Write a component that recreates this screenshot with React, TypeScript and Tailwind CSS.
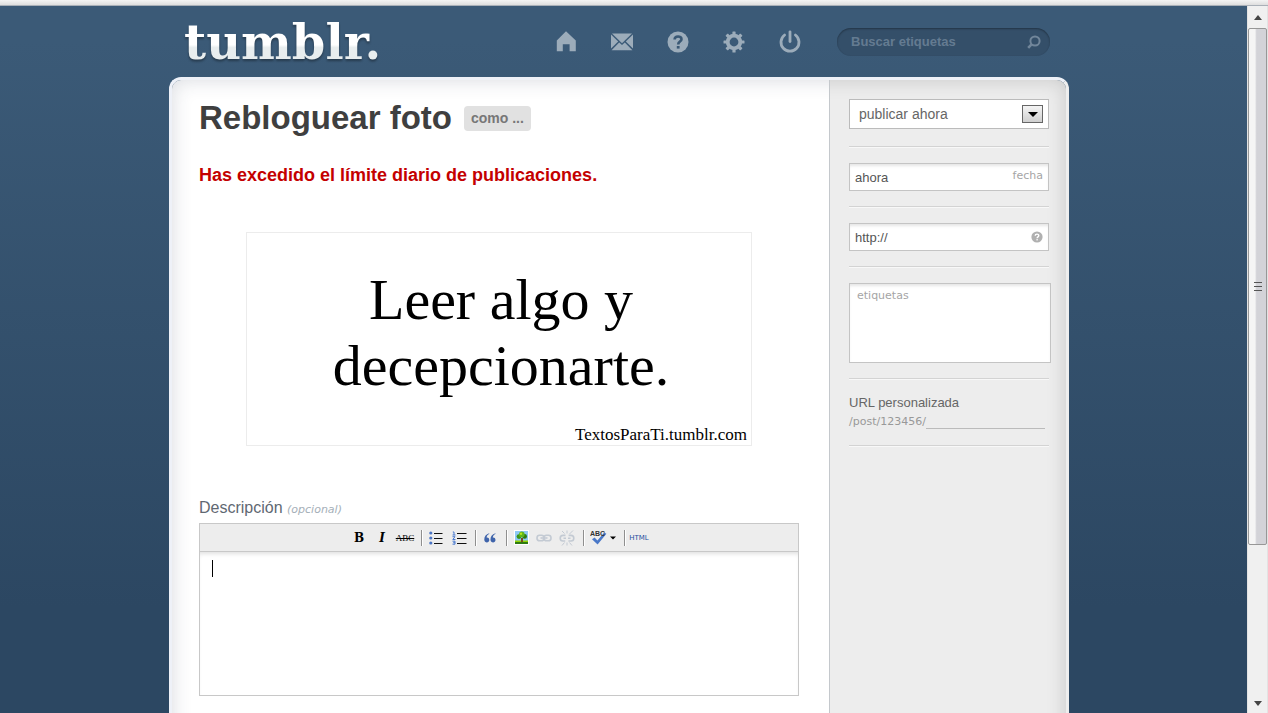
import React from "react";

const HomeIcon = () => (
  <svg viewBox="0 0 24 24" className="size-6" fill="currentColor">
    <path d="M12 1.2 L21.8 10.5 V21.2 H15.6 V14.2 H8.8 V21.2 H2.8 V10.5 Z" />
  </svg>
);

const MailIcon = () => (
  <svg viewBox="0 0 24 24" className="size-6" fill="currentColor">
    <path d="M2 3.5 H22 L12 13.2 Z" />
    <path d="M1 4.5 L8.2 11.4 L1 18.6 Z" />
    <path d="M23 4.5 L15.8 11.4 L23 18.6 Z" />
    <path d="M9.2 12.4 L12 15 L14.8 12.4 L22.4 20.3 H1.6 Z" />
  </svg>
);

const HelpIcon = () => (
  <svg viewBox="0 0 24 24" className="size-6">
    <circle cx="12" cy="12" r="10.5" fill="currentColor" />
    <path
      d="M8.6 9.6 C8.6 5.4 15.5 5.6 15.5 9.2 C15.5 11.6 12.2 11.6 12.2 14.4"
      fill="none"
      stroke="#3a5874"
      strokeWidth="2.6"
    />
    <rect x="10.8" y="16" width="2.8" height="2.6" fill="#3a5874" />
  </svg>
);

const teeth = [0, 45, 90, 135, 180, 225, 270, 315];

const GearIcon = () => (
  <svg viewBox="0 0 24 24" className="size-6">
    <circle cx="12" cy="12" r="6.3" fill="none" stroke="currentColor" strokeWidth="3.8" />
    {teeth.map((angle) => (
      <rect
        key={angle}
        x="10.4"
        y="1.5"
        width="3.2"
        height="4"
        rx="0.6"
        fill="currentColor"
        transform={`rotate(${angle} 12 12)`}
      />
    ))}
  </svg>
);

const PowerIcon = () => (
  <svg viewBox="0 0 24 24" className="size-6" fill="none" stroke="currentColor">
    <path d="M6.6 5 A9 9 0 1 0 17.4 5" strokeWidth="2.8" strokeLinecap="round" />
    <path d="M12 1.8 V11.5" strokeWidth="2.8" strokeLinecap="round" />
  </svg>
);

const nav = [
  { label: "Inicio", icon: <HomeIcon /> },
  { label: "Mensajes", icon: <MailIcon /> },
  { label: "Ayuda", icon: <HelpIcon /> },
  { label: "Preferencias", icon: <GearIcon /> },
  { label: "Salir", icon: <PowerIcon /> },
];

const Header = () => (
  <header className="flex h-[71px] items-center pr-[19px] pl-[15px]">
    <a
      href="#"
      className="bg-linear-to-b from-white from-55% to-[#e8edee] to-60% bg-clip-text font-['DejaVu_Serif'] text-[48px] leading-[56px] font-bold text-transparent drop-shadow-[0_2px_1px_rgba(0,0,0,0.35)]"
    >
      tumblr.
    </a>
    <nav className="ml-auto flex gap-8 text-[#9cacba]">
      {nav.map((item) => (
        <a key={item.label} href="#" aria-label={item.label}>
          {item.icon}
        </a>
      ))}
    </nav>
    <div className="ml-[35px] flex h-7 w-[213px] items-center rounded-full bg-[#344f69] pr-2 pl-[14px] shadow-[inset_0_1px_2px_rgba(0,0,0,0.35)]">
      <input
        type="text"
        aria-label="Buscar etiquetas"
        placeholder="Buscar etiquetas"
        className="min-w-0 flex-1 bg-transparent text-[13px] font-bold outline-none placeholder:text-[#647b91]"
      />
      <svg viewBox="0 0 16 16" className="size-4" fill="none" stroke="#71869a">
        <circle cx="9" cy="7" r="4.6" strokeWidth="2" />
        <path d="M5.8 10.2 L2.2 13.8" strokeWidth="2.6" />
      </svg>
    </div>
  </header>
);

const Separator = () => (
  <span className="ml-[3px] h-4 w-[2px] border-r border-l border-l-[#8f8f8f] border-r-white" />
);

const Tool = ({ label, children }: { label: string; children: React.ReactNode }) => (
  <button type="button" aria-label={label} className="flex h-5 w-5 items-center justify-center">
    {children}
  </button>
);

const Chevron = () => (
  <svg viewBox="0 0 6 4" className="h-1 w-1.5">
    <path d="M0 0.5 H6 L3 3.5 Z" fill="#000" />
  </svg>
);

const Toolbar = () => (
  <div className="flex h-7 items-center justify-center gap-[3px] border-b border-[#c8c8c8] bg-[#ededed]">
    <Tool label="Negrita">
      <span className="font-['DejaVu_Serif'] text-[12px] leading-4 font-bold text-black">B</span>
    </Tool>
    <Tool label="Cursiva">
      <span className="font-['DejaVu_Serif'] text-[12px] leading-4 font-bold text-black italic">I</span>
    </Tool>
    <Tool label="Tachado">
      <span className="font-['Liberation_Serif'] text-[9px] leading-4 text-black line-through">ABC</span>
    </Tool>
    <Separator />
    <Tool label="Lista">
      <svg viewBox="0 0 14 14" className="size-3.5">
        {[2, 7, 12].map((y) => (
          <g key={y}>
            <circle cx="1.8" cy={y} r="1.6" fill="#4a74c4" />
            <path d={`M5 ${y + 0.5} H13.5`} stroke="#111" />
          </g>
        ))}
      </svg>
    </Tool>
    <Tool label="Lista numerada">
      <svg viewBox="0 0 15 14" className="h-3.5 w-[15px]" fill="none">
        <path d="M5 2.5 H14.5 M5 7.5 H14.5 M5 12.5 H14.5" stroke="#111" />
        <path
          d="M0.8 1 H2 V4 M0.5 4 H3.5 M0.5 5.7 H3 L0.8 8.5 H3.5 M0.5 10.2 H3 V13.2 H0.5 M1.2 11.7 H3"
          stroke="#4a7ad0"
        />
      </svg>
    </Tool>
    <Separator />
    <Tool label="Cita">
      <svg viewBox="0 0 12 10" className="h-2.5 w-3" fill="#3f64ab">
        <path d="M5.2 0.3 C2 1.2 0.2 3.6 0.3 6.8 C0.4 10.2 5.3 10.2 5.3 7 C5.3 5 3.9 4.3 2.6 4.5 C2.8 2.8 3.8 1.6 5.2 1 Z" />
        <path d="M11.4 0.3 C8.2 1.2 6.4 3.6 6.5 6.8 C6.6 10.2 11.5 10.2 11.5 7 C11.5 5 10.1 4.3 8.8 4.5 C9 2.8 10 1.6 11.4 1 Z" />
      </svg>
    </Tool>
    <Separator />
    <Tool label="Imagen">
      <svg viewBox="0 0 15 15" className="size-[15px]">
        <rect width="15" height="15" fill="#fff" />
        <rect x="1" y="1" width="13" height="10" fill="#8ec9f5" />
        <rect x="1" y="10.5" width="13" height="2" fill="#8fd400" />
        <rect x="1" y="12" width="13" height="2" fill="#2f7a12" />
        <rect x="7" y="8" width="2" height="4" fill="#7a4a1c" />
        <circle cx="5" cy="6.6" r="2.4" fill="#3d9414" />
        <circle cx="10.6" cy="6.4" r="2.4" fill="#2c7a10" />
        <circle cx="7.8" cy="4.4" r="2.8" fill="#5db51e" />
        <circle cx="7" cy="3.8" r="1.2" fill="#b2e61c" />
      </svg>
    </Tool>
    <Tool label="Enlace">
      <svg viewBox="0 0 16 8" className="h-2 w-4" fill="none" stroke="#c3cad3" strokeWidth="1.6">
        <rect x="1" y="1.2" width="7" height="5.6" rx="2.6" />
        <rect x="8" y="1.2" width="7" height="5.6" rx="2.6" />
        <path d="M4.5 4 H11.5" />
      </svg>
    </Tool>
    <Tool label="Quitar enlace">
      <svg viewBox="0 0 16 16" className="size-4" fill="none" stroke="#c3cad3">
        <path d="M6.5 5.4 H4 A2.6 2.6 0 0 0 4 11 H6.2 M4.5 8.2 H7" strokeWidth="1.6" />
        <path d="M9.6 5.4 H12 A2.6 2.6 0 0 1 12 11 H9.4 M9 8.2 H11.5" strokeWidth="1.6" />
        <path d="M3 1 L5.5 3.5 M8 0.5 V3.5 M14 0.5 L10.5 4 M3 15.5 L5.5 12.5 M8 12.5 V15.5 M13 15.5 L10.5 12.5" />
      </svg>
    </Tool>
    <Separator />
    <button
      type="button"
      aria-label="Revisar ortografía"
      className="flex h-5 w-[30px] items-center justify-between px-[2px]"
    >
      <svg viewBox="0 0 17 17" className="size-[17px]">
        <path d="M2 10.2 L4.6 8.4 L7.4 11.4 L14.2 3.6 L16.4 4.8 L7.6 15.4 Z" fill="#4a78c8" />
        <text x="0" y="6.5" fontSize="7" fontWeight="bold" fontFamily="Liberation Sans" fill="#333">
          ABC
        </text>
      </svg>
      <Chevron />
    </button>
    <Separator />
    <Tool label="Editar HTML">
      <span className="font-['DejaVu_Sans'] text-[7px] leading-4 text-[#1f4f9f]">HTML</span>
    </Tool>
  </div>
);

const Divider = () => <hr className="h-[2px] border-t border-b border-t-[#d3d3d3] border-b-[#f8f8f8]" />;

const Post = () => (
  <main className="min-w-0 flex-1 bg-white pt-[18px] pr-[30px] pb-[17px] pl-[27px] shadow-[inset_16px_16px_20px_-16px_rgba(40,50,80,0.18)]">
    <div className="flex items-center gap-3">
      <h1 className="text-[33px] leading-10 font-bold text-[#3f3f3f]">Rebloguear foto</h1>
      <button
        type="button"
        className="h-[25px] rounded-[4px] bg-[#e1e1e1] px-[7px] text-[14px] font-bold text-[#777]"
      >
        como ...
      </button>
    </div>
    <p className="mt-[25px] text-[18px] leading-6 font-bold text-[#c40000]">
      Has excedido el límite diario de publicaciones.
    </p>

    <figure className="mx-auto mt-[45px] w-[506px] border border-[#ececec] pt-[34px] font-['Liberation_Serif'] text-black">
      <p className="pl-1 text-center text-[58px] leading-[66px]">
        Leer algo y
        <br />
        decepcionarte.
      </p>
      <figcaption className="mt-[26px] pr-1 text-right text-[17px] leading-5">
        TextosParaTi.tumblr.com
      </figcaption>
    </figure>

    <label htmlFor="description" className="mt-[50px] block text-[16px] leading-6 text-[#5f6872]">
      Descripción{" "}
      <em className="font-['DejaVu_Sans'] text-[11px] text-[#a5afb8]">(opcional)</em>
    </label>
    <div className="mt-px border border-[#c8c8c8]">
      <Toolbar />
      <div className="relative">
        <textarea
          id="description"
          className="block h-[143px] w-full resize-none bg-white p-3 text-[14px] shadow-[inset_0_4px_4px_-2px_rgba(0,0,0,0.12)] outline-none"
        />
        <span className="absolute top-2 left-3 h-[17px] w-px bg-black" />
      </div>
    </div>
  </main>
);

const fieldStyle =
  "block border border-[#c4c4c4] bg-white text-[#555] shadow-[inset_0_3px_3px_-1px_rgba(0,0,0,0.1)] outline-none";

const Sidebar = () => (
  <aside className="flex w-[237px] flex-col gap-[15px] border-l border-[#c4c8cc] bg-[#ededed] pt-[19px] pr-[17px] pl-[19px] shadow-[inset_-16px_16px_20px_-16px_rgba(0,0,0,0.16)]">
    <div className="relative pb-[2px]">
      <select
        aria-label="Estado"
        className="block h-[30px] w-full appearance-none border border-[#bbb] bg-white pl-[9px] text-[14px] text-[#666]"
      >
        <option>publicar ahora</option>
      </select>
      <span className="pointer-events-none absolute top-[6px] right-[6px] flex h-[18px] w-[21px] items-center justify-center border border-[#666] bg-linear-to-b from-[#f4f4f4] to-[#cfcfcf]">
        <svg viewBox="0 0 10 5" className="h-[5px] w-2.5">
          <path d="M0 0 H10 L5 5 Z" fill="#000" />
        </svg>
      </span>
    </div>
    <Divider />
    <div className="relative">
      <input id="date" defaultValue="ahora" className={`${fieldStyle} h-7 w-full px-[5px] text-[13px]`} />
      <label
        htmlFor="date"
        className="absolute top-[5px] right-[6px] font-['DejaVu_Sans'] text-[11px] leading-4 text-[#a5a5a5]"
      >
        fecha
      </label>
    </div>
    <Divider />
    <div className="relative">
      <input
        aria-label="Fuente"
        defaultValue="http://"
        className={`${fieldStyle} h-7 w-full px-[5px] text-[13px]`}
      />
      <svg viewBox="0 0 12 12" className="absolute top-2 right-[6px] size-3">
        <circle cx="6" cy="6" r="5.6" fill="#b0b0b0" />
        <path
          d="M4.2 4.8 C4.2 2.6 7.8 2.7 7.8 4.6 C7.8 5.9 6.1 5.8 6.1 7.3"
          fill="none"
          stroke="#fff"
          strokeWidth="1.4"
        />
        <rect x="5.4" y="8.1" width="1.4" height="1.3" fill="#fff" />
      </svg>
    </div>
    <Divider />
    <textarea
      aria-label="etiquetas"
      placeholder="etiquetas"
      className={`${fieldStyle} -mr-[2px] h-20 resize-none px-[7px] py-1 font-['DejaVu_Sans'] text-[11px] leading-4 placeholder:text-[#a5a5a5]`}
    />
    <Divider />
    <div>
      <label htmlFor="slug" className="block text-[13px] leading-4 text-[#666]">
        URL personalizada
      </label>
      <div className="mt-[3px] flex font-['DejaVu_Sans'] text-[11px] leading-4 text-[#999]">
        <span>/post/123456/</span>
        <input id="slug" className="mr-1 h-[15px] min-w-0 flex-1 border-b border-[#bbb] bg-transparent outline-none" />
      </div>
    </div>
    <Divider />
  </aside>
);

const Scrollbar = () => (
  <div className="flex w-[21px] flex-col border-x border-[#e3e3e3] bg-[#f0f0f0]">
    <div className="flex h-[22px] items-center justify-center">
      <svg viewBox="0 0 8 5" className="h-[5px] w-2">
        <path d="M4 0 L8 5 H0 Z" fill="#444" />
      </svg>
    </div>
    <div className="flex flex-[16] flex-col items-center justify-center gap-[3px] rounded-[2px] border border-[#979797] bg-linear-to-r from-[#f5f5f5] from-35% to-[#d3d3d8] to-45%">
      <span className="h-px w-2 bg-[#555]" />
      <span className="h-px w-2 bg-[#555]" />
      <span className="h-px w-2 bg-[#555]" />
    </div>
    <div className="flex flex-[5] items-end justify-center pb-[7px]">
      <svg viewBox="0 0 8 5" className="h-[5px] w-2">
        <path d="M0 0 H8 L4 5 Z" fill="#444" />
      </svg>
    </div>
  </div>
);

const App = () => {
  return (
    <div className="flex min-h-screen flex-col font-['Liberation_Sans',sans-serif]">
      <div className="h-[6px] border-b border-[#a9b0b8] bg-linear-to-b from-[#f4f4f4] to-[#dedede]" />
      <div className="flex flex-1">
        <div className="flex min-w-0 flex-1 justify-center bg-linear-to-b from-[#3b5a77] from-5% to-[#2c4762] to-85% pr-[9px]">
          <div className="flex w-[900px] flex-col">
            <Header />
            <div className="flex flex-1 overflow-hidden rounded-t-[12px] border-x-3 border-t-3 border-t-[#eef1f8] border-r-[#eee] border-l-[#eef1f8]">
              <Post />
              <Sidebar />
            </div>
          </div>
        </div>
        <Scrollbar />
      </div>
    </div>
  );
};

export default App;
